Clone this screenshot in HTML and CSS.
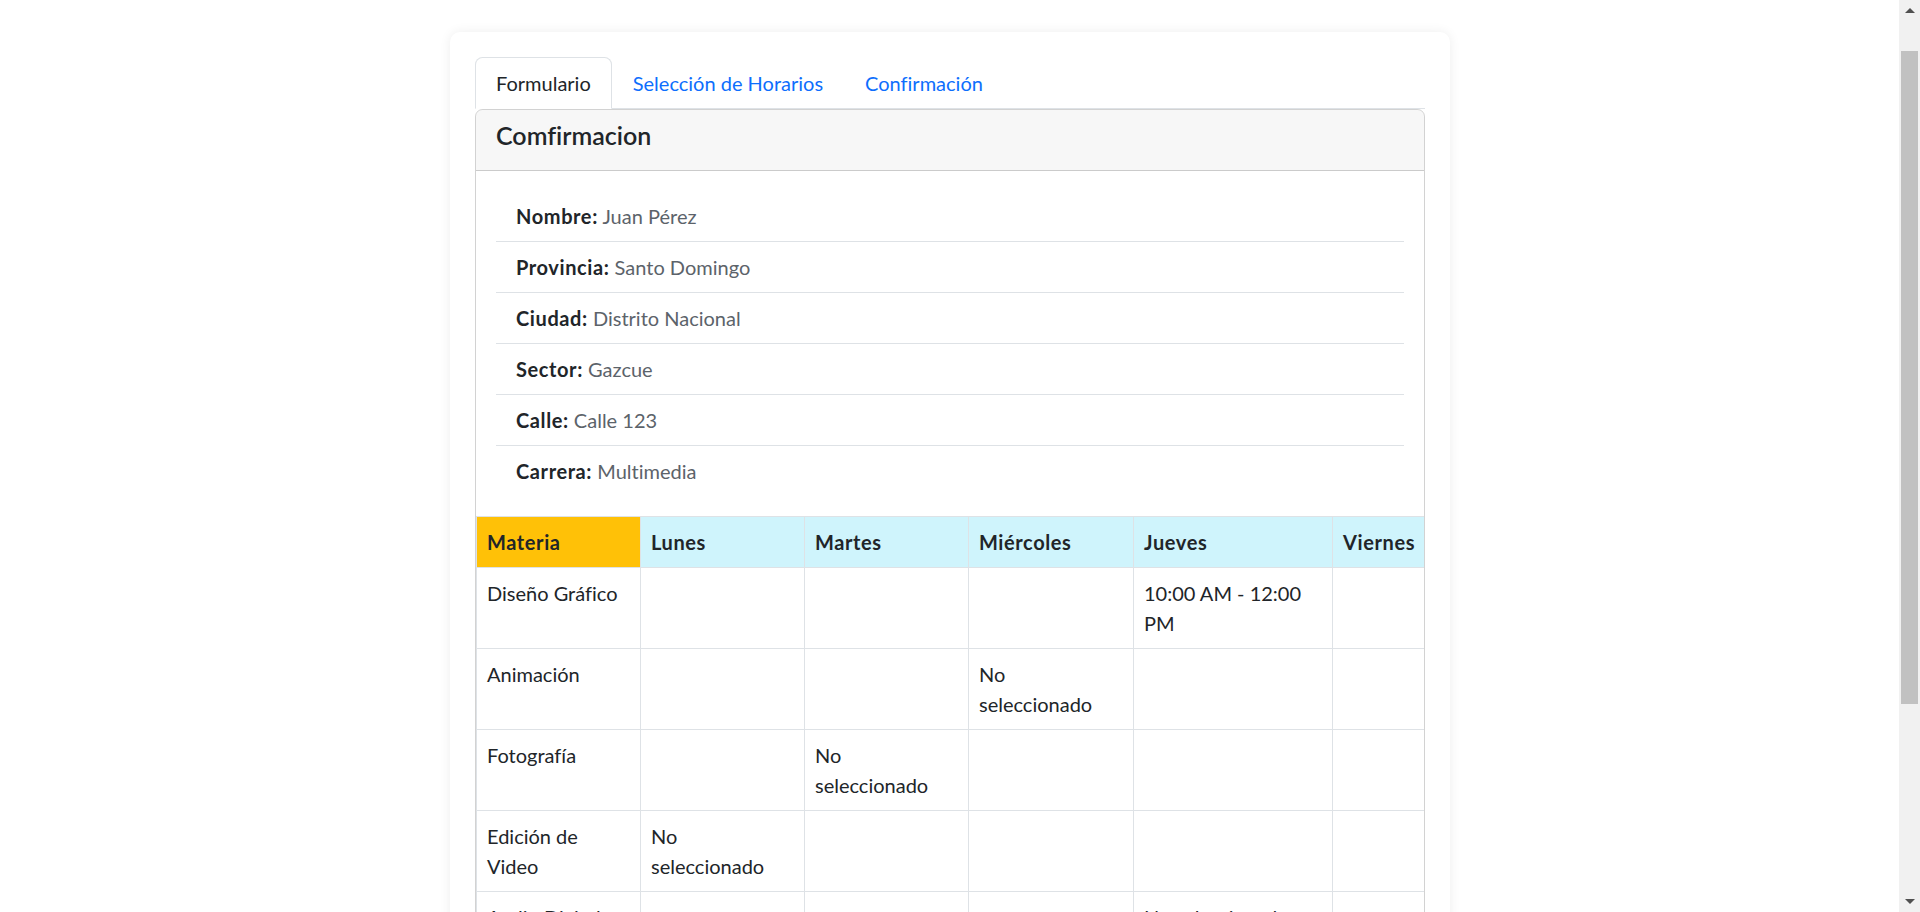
FILE: index.html
```html
<!DOCTYPE html>
<html lang="es">
<head>
<meta charset="utf-8">
<title>Confirmación</title>
<link rel="stylesheet" href="styles.css">
</head>
<body>
<div class="page">
  <ul class="tabs">
    <li><a class="tab active" href="#">Formulario</a></li>
    <li><a class="tab" href="#">Selección de Horarios</a></li>
    <li><a class="tab" href="#">Confirmación</a></li>
  </ul>
  <div class="card">
    <div class="card-header"><h5 class="card-title">Comfirmacion</h5></div>
    <div class="card-body">
      <ul class="info-list">
        <li><strong>Nombre:</strong> Juan Pérez</li>
        <li><strong>Provincia:</strong> Santo Domingo</li>
        <li><strong>Ciudad:</strong> Distrito Nacional</li>
        <li><strong>Sector:</strong> Gazcue</li>
        <li><strong>Calle:</strong> Calle 123</li>
        <li><strong>Carrera:</strong> Multimedia</li>
      </ul>
    </div>
    <table class="schedule">
      <thead>
        <tr>
          <th class="col-subject">Materia</th>
          <th class="col-mon">Lunes</th>
          <th class="col-tue">Martes</th>
          <th class="col-wed">Miércoles</th>
          <th class="col-thu">Jueves</th>
          <th class="col-fri">Viernes</th>
        </tr>
      </thead>
      <tbody>
        <tr><td>Diseño Gráfico</td><td></td><td></td><td></td><td>10:00 AM - 12:00 PM</td><td></td></tr>
        <tr><td>Animación</td><td></td><td></td><td>No seleccionado</td><td></td><td></td></tr>
        <tr><td>Fotografía</td><td></td><td>No seleccionado</td><td></td><td></td><td></td></tr>
        <tr><td>Edición de Video</td><td>No seleccionado</td><td></td><td></td><td></td><td></td></tr>
        <tr><td>Audio Digital</td><td></td><td></td><td></td><td>No seleccionado</td><td></td></tr>
      </tbody>
    </table>
  </div>
</div>
<div class="scrollbar" aria-hidden="true">
  <div class="sb-button"><span class="sb-arrow-up"></span></div>
  <div class="sb-thumb"></div>
  <div class="sb-rest"></div>
  <div class="sb-button"><span class="sb-arrow-down"></span></div>
</div>
</body>
</html>
```
FILE: styles.css
```css
* { box-sizing: border-box; }

html, body { overflow-x: hidden; }

body {
  margin: 0;
  padding-right: 20px;
  background: #fff;
  font-family: Lato, "Noto Sans", sans-serif;
  font-size: 20px;
  line-height: 30px;
  color: #212529;
  font-variant-ligatures: none;
}

.page {
  width: 1000px;
  margin: 32px auto 205px;
  padding: 25px;
  background: #fff;
  border-radius: 10px;
  box-shadow: 0 0 12px rgba(0, 0, 0, 0.07);
}

.tabs {
  display: flex;
  list-style: none;
  margin: 0;
  padding: 0;
  border-bottom: 1px solid #dee2e6;
}

.tab {
  display: block;
  padding: 10px 20px;
  border: 1px solid transparent;
  border-radius: 7.5px 7.5px 0 0;
  margin-bottom: -1px;
  color: #0d6efd;
  text-decoration: none;
}

.tab.active {
  color: #212529;
  background: #fff;
  border-color: #dee2e6 #dee2e6 #fff;
}

.card {
  border: 1px solid rgba(0, 0, 0, 0.175);
  border-radius: 7.5px;
  overflow: hidden;
}

.card-header {
  background: rgba(0, 0, 0, 0.03);
  border-bottom: 1px solid rgba(0, 0, 0, 0.175);
  padding: 10px 20px;
}

.card-title {
  margin: 0 0 10px;
  font-size: 25px;
  font-weight: 600;
  line-height: 30px;
}

.card-body { padding: 20px; }

.info-list { list-style: none; margin: 0; padding: 0; }
.info-list li {
  padding: 10px 20px;
  border-bottom: 1px solid #dee2e6;
  color: #5c636a;
}
.info-list li:last-child { border-bottom: 0; }
.info-list strong { color: #212529; font-weight: 700; letter-spacing: 0.6px; }

.schedule {
  width: 100%;
  border-collapse: collapse;
  table-layout: fixed;
}
.schedule th,
.schedule td {
  border: 1px solid #dee2e6;
  padding: 10px;
  text-align: left;
  vertical-align: top;
  font-weight: 400;
}
.schedule th { background: #cff4fc; font-weight: 700; letter-spacing: 0.6px; }
.schedule th.col-subject { background: #ffc107; }
.col-subject { width: 164px; }
.col-mon { width: 164px; }
.col-tue { width: 164px; }
.col-wed { width: 165px; }
.col-thu { width: 199px; }
.col-fri { width: 92px; }

/* drawn browser scrollbar */
.scrollbar {
  position: fixed;
  top: 0;
  right: 0;
  width: 21px;
  height: 100vh;
  background: #f1f1f1;
  display: flex;
  flex-direction: column;
  align-items: center;
}
.sb-button {
  height: 21px;
  width: 21px;
  display: flex;
  align-items: center;
  justify-content: center;
  flex: none;
}
.sb-arrow-up,
.sb-arrow-down {
  width: 0;
  height: 0;
  border-left: 5px solid transparent;
  border-right: 5px solid transparent;
}
.sb-arrow-up { border-bottom: 5px solid #505050; }
.sb-arrow-down { border-top: 5px solid #505050; }
.sb-thumb {
  margin-top: 30px;
  width: 17px;
  height: 653px;
  background: #c1c1c1;
  flex: none;
}
.sb-rest { flex: 1; }
```
